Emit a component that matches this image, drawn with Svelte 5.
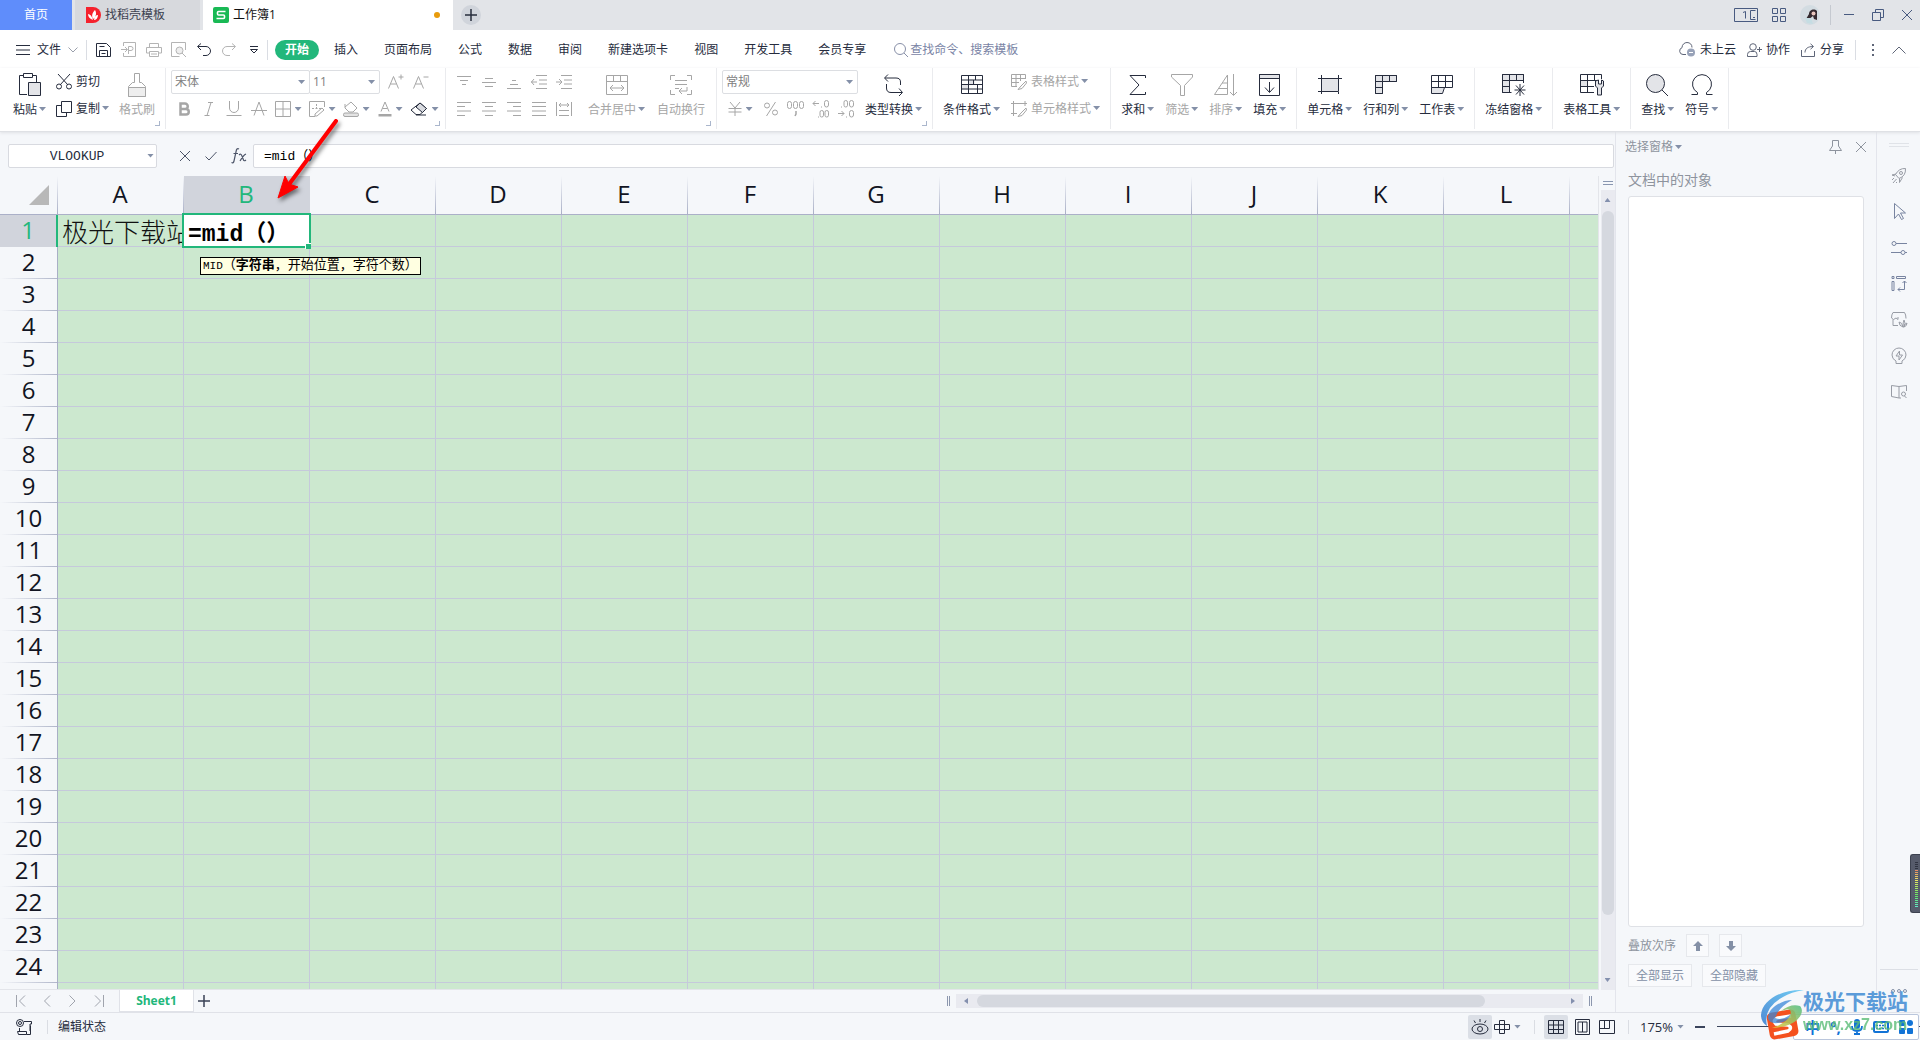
<script lang="ts">
  type Icon = [number, number, string];
  interface Tool { label: string; icon: string; off?: boolean; caret?: boolean }

  // width, height, inner svg
  const icons: Record<string, Icon> = {
    docer: [16, 16, '<path d="M1 0h7a8 8 0 0 1 0 16H1z" fill="#f5222d" stroke="none"/><path d="M8 13C5 12 3 10 3 7c2 0 4 2 5 6zM8 12C6 8 8 5 10 3c2 3 1 7-2 9zM9 13c0-3 2-5 4-5 0 3-2 5-4 5z" fill="#fff" stroke="none"/>'],
    sheet: [16, 16, '<rect width="16" height="16" rx="2" fill="#19b955" stroke="none"/><path d="M12.500 4.500H5.500a1 1 0 0 0-1 1V7a1 1 0 0 0 1 1h5a1 1 0 0 1 1 1v1.500a1 1 0 0 1-1 1h-7" stroke="#fff" stroke-width="1.600"/>'],
    plus: [12, 12, '<path d="M6 0v12M0 6h12" stroke-width="1.500"/>'],
    window: [24, 14, '<path d="M.5.5h23v13H.5zM21.500 2.500h-5v9h5M19 9.500h2"/><path d="M9 4.500l2.500-1v7"/>'],
    apps: [14, 14, '<path d="M.5.5h5v5h-5zM8.500.5h5v5h-5zM.5 8.500h5v5h-5zM8.500 8.500h5v5h-5z"/>'],
    avatar: [20, 20, '<circle cx="10" cy="10" r="10" fill="#d3dce2" stroke="none"/><path d="M9 9c0-4 5-6 8-3l0 9-3-1-1-3-5 4-2-1z" fill="#33292f" stroke="none"/><circle cx="13.500" cy="8.500" r="2" fill="#e8c5bd" stroke="none"/><path d="M5 13l6 0 2 6-6-1z" fill="#c5dde3" stroke="none"/>'],
    min: [12, 12, '<path d="M1 5.500h10"/>'],
    restore: [12, 12, '<path d="M.5 3.500h8v8h-8zM3.500 3.500v-3h8v8h-3"/>'],
    close: [12, 12, '<path d="M1 1l10 10M11 1L1 11"/>'],
    menu: [14, 10, '<path d="M0 .5h14M0 5h14M0 9.500h14"/>'],
    down: [10, 6, '<path d="M.5.5L5 5 9.500.5"/>'],
    up: [14, 8, '<path d="M.5 7.500L7 1l6.500 6.500"/>'],
    save: [16, 16, '<path d="M.5 1.500h10l4 4v9H.5zM3.500 14.500v-6h8v6M3.500 4.500h5M5.500 11.500h4"/>'],
    output: [16, 16, '<path d="M2.500 4V.5h12v14h-12V11M0 7.500h6M4 5l2.500 2.500L4 10M7.500 12V4.500h2.500a2 2 0 0 1 0 4H8"/>'],
    print: [16, 16, '<path d="M3.500 5V1.500h9V5M3.500 11H.5V5.500h15V11h-3M3.500 9.500h9v5h-9zM5 12h6"/>'],
    preview: [16, 16, '<path d="M14.500 8V.5H.5v14h8"/><circle cx="8.500" cy="8.500" r="3.500" fill="#eee"/><path d="M11 11l4 4"/>'],
    undo: [14, 14, '<path d="M4 .5L.5 3.500 4 7M1 3.500h8a4 4 0 0 1 0 9H6"/>'],
    redo: [14, 14, '<path d="M10 .5l3.500 3L10 7M13 3.500H5a4 4 0 0 0 0 9h3"/>'],
    more: [8, 8, '<path d="M0 .5h8M.5 3.500L4 7l3.500-3.500z"/>'],
    search: [14, 14, '<circle cx="6" cy="6" r="5.500"/><path d="M10 10l4 4"/>'],
    cloud: [17, 16, '<path d="M7 12.500H4a3.500 3.500 0 0 1-1-6.800C3 2.500 5.500.5 8 .5c3 0 5 2 5 5"/><circle cx="12" cy="10.500" r="4" fill="#98a2b8" stroke="none"/><path d="M10 10.500h4" stroke="#fff"/>'],
    user: [15, 14, '<circle cx="6" cy="4" r="3.300"/><path d="M.5 13.500v-2q0-3 3-3h4q2.500 0 2.500 3v2zM10 6.500h5M12.500 4v5"/>'],
    share: [15, 14, '<path d="M.5 7v6.500h13V8M4 9.500c0-4 3-6 8-6M9.500.8l3 2.700-3 2.700"/>'],
    dots: [4, 14, '<path d="M1 1h2v2H1zM1 6h2v2H1zM1 11h2v2H1z" fill="currentColor" stroke="none"/>'],
    paste: [22, 24, '<path d="M8 21.500H.5v-19H4M14 2.500h3.500V9M4.500.5h9v4h-9z"/><path d="M9.500 9.500h12v13h-12z" fill="#e3e4e8"/>'],
    cut: [16, 16, '<path d="M2 0l10 11M14 0L4 11"/><circle cx="3" cy="12.500" r="2.500"/><circle cx="13" cy="12.500" r="2.500"/>'],
    copy: [16, 16, '<path d="M5.500.5h10v11h-10zM5 4.500H.5v11h10V12"/>'],
    brush: [18, 24, '<path d="M6.500.5h5v9h2l4 4v10H.5v-10l4-4h2z"/><path d="M.5 14.500h17v9H.5z" fill="#eee"/>'],
    fontUp: [16, 16, '<path d="M.5 14.500l5-12 5 12M2.500 10h6M10.500 3h5M13 .5v5"/>'],
    fontDown: [16, 16, '<path d="M.5 14.500l5-12 5 12M2.500 10h6M10.500 3h5"/>'],
    bold: [12, 14, '<path d="M2.500 1.500h4.500a2.500 2.500 0 0 1 0 5.500H2.500zM2.500 7h5.500a2.700 2.700 0 0 1 0 5.500H2.500z" stroke-width="2.500"/>'],
    italic: [10, 14, '<path d="M4 .5h5M.5 13.500h5M7 .5l-4 13"/>'],
    underline: [16, 16, '<path d="M3.500 0v7a4.500 4.500 0 0 0 9 0V0M.5 14.500h15"/>'],
    strike: [16, 16, '<path d="M3 14.500L8 1l5 13.500M0 9.500h16"/>'],
    borders: [16, 16, '<path d="M.5.5h15v15H.5zM.5 8h15M8 .5v15"/>'],
    draw: [16, 16, '<path d="M15.500 6V.5H.5v15H6M3 7.500h2M6.500 7.500h2M7.500 3v2M7.500 6v2M10 7.500h2M6 13l7-6 2 2-7 6H6z"/>'],
    fill: [16, 16, '<path d="M2 6L8 1l6 6-4 4H6L2 7V3"/><rect x=".5" y="12" width="15" height="3.500" rx="1.500" fill="#e3e3e3"/>'],
    color: [14, 16, '<path d="M3 10.500L7 1l4 9.500M4.500 7.500h5"/><path d="M.5 13h13v2.500H.5z" fill="currentColor" stroke="none"/>'],
    eraser: [18, 14, '<path d="M10 1l6.500 5.500-6.500 6H6L1 8z"/><path d="M10 1l6.500 5.500-4 4L6 5z" fill="#d9dbe0"/><path d="M6 13h10"/>'],
    alTop: [14, 14, '<path d="M0 1.500h14M3 5.500h8M5 9.500h4"/>'],
    alMid: [14, 14, '<path d="M3 3.500h8M0 7.500h14M3 11.500h8"/>'],
    alBot: [14, 14, '<path d="M5 5.500h4M3 9.500h8M0 13.500h14"/>'],
    outdent: [16, 14, '<path d="M5 .5h11M8 5h8M8 9h8M0 7h6M3 4L.5 7 3 10M5 13.500h11"/>'],
    indent: [16, 14, '<path d="M5 .5h11M8 5h8M8 9h8M0 7h6M3 4l3 3-3 3M5 13.500h11"/>'],
    alLeft: [14, 14, '<path d="M0 .5h14M0 4.500h8M0 9h14M0 13.500h8"/>'],
    alCenter: [14, 14, '<path d="M0 .5h14M3 4.500h8M0 9h14M3 13.500h8"/>'],
    alRight: [14, 14, '<path d="M0 .5h14M6 4.500h8M0 9h14M6 13.500h8"/>'],
    justify: [14, 14, '<path d="M0 .5h14M0 4.500h14M0 9h14M0 13.500h14"/>'],
    distribute: [16, 14, '<path d="M.5 0v14M15.500 0v14M3 3h10M5 1L3 3l2 2M11 1l2 2-2 2M3 8.500h10M3 13.500h10"/>'],
    merge: [22, 20, '<path d="M.5.5h21v19H.5zM.5 6.500h21M7.500.5v6M14.500.5v6M4 13h14M7 10l-3 3 3 3M15 10l3 3-3 3"/>'],
    wrap: [22, 20, '<path d="M5 .5H.5V5M17 .5h4.500V5M5 19.500H.5V15M17 19.500h4.500V15M5 5.500h12M5 9.500h12M5 13.500h4M17 12v4H9M12 13l-3 3 3 3"/>'],
    yen: [14, 14, '<path d="M2 0l5 6 5-6M7 6v8M.5 6.500h13M.5 10h13"/>'],
    percent: [14, 14, '<circle cx="3" cy="3.500" r="2.500"/><circle cx="11" cy="10.500" r="2.500"/><path d="M11.500 0l-9 14"/>'],
    thousand: [18, 16, '<rect x=".5" y=".5" width="4" height="7" rx="2"/><rect x="6.500" y=".5" width="4" height="7" rx="2"/><rect x="12.500" y=".5" width="4" height="7" rx="2"/><path d="M9 10v3l-1 2" stroke-width="1.500"/>'],
    decMore: [16, 18, '<path d="M0 3.500h6M2.500 1L0 3.500 2.500 6M8 7h1M5 17h1"/><rect x="11.500" y=".5" width="4" height="6.500" rx="2"/><rect x="7" y="10.500" width="3.500" height="6.500" rx="1.700"/><rect x="12" y="10.500" width="3.500" height="6.500" rx="1.700"/>'],
    decLess: [16, 18, '<path d="M0 13.500h6M3.500 11L6 13.500 3.500 16M3 7h1M8 17h1"/><rect x="6" y=".5" width="3.500" height="6.500" rx="1.700"/><rect x="11.500" y=".5" width="4" height="6.500" rx="2"/><rect x="11.500" y="10.500" width="4" height="6.500" rx="2"/>'],
    convert: [20, 22, '<path d="M4 .5L.5 4 4 7.500M1 4h11q4.500 0 4.500 4v3M2.500 10v4q0 4.500 4.500 4.500h11M15 14.500l3.500 4-3.500 3.500"/>'],
    condition: [22, 20, '<path d="M7.500 4.500h6v5h-6zM1 9.500h6.500v5H1z" fill="#e3e4e8" stroke="none"/><path d="M.5.5h21v18H.5zM.5 5h21M.5 9.500h21M.5 14h21M7.500.5V14M14.500.5V5M12.500 5v4.500M16.500 9.500v9M7.500 14v4.500" />'],
    tableStyle: [16, 16, '<path d="M14.500 5V.5H.5v12H6M.5 4.500h14M.5 8.500H8M5 .5v12M9.500.5V7M15 7l-5 5-3 3.500 4-1 4.500-5.500z"/>'],
    cellStyle: [16, 16, '<path d="M0 2.500h16M2.500 0v15M0 12.500h6M14 0v5M15 7l-5 5-3 3.500 4-1 4.500-5.500z"/>'],
    sum: [18, 20, '<path d="M16.500 3V.5H1L10 10 1 19.500h15.500V17"/>'],
    filter: [22, 22, '<path d="M.5.5h21V3l-8 8.500v10h-4v-10L.5 3z"/>'],
    sort: [24, 22, '<path d="M13.500 1v19.500H.5zM8 9h5.500M4.500 14.500h9M19.500 0v21M16 18l3.500 3.500L23 18"/>'],
    fillDown: [22, 22, '<path d="M.5.5h20v4H.5z" fill="#e3e4e8"/><path d="M.5.5h20v21H.5zM10.500 8v10M6 13.500l4.500 5 4.500-5"/>'],
    cell: [24, 20, '<path d="M3.500 3.500h17v13h-17z" fill="#e3e4e8"/><path d="M3.500 0v19M20.500 0v14M0 3.500h24M0 16.500h18M20.500 17v2"/>'],
    rowcol: [22, 20, '<path d="M.5.5h21v6h-14v12h-7z" fill="#e3e4e8"/><path d="M.5.5h21v6h-14v12h-7zM7.500.5v6H.5M14.500.5v6M.5 12.500h7"/>'],
    worksheet: [22, 20, '<path d="M.5 12.500h13l-2 6H.5z" fill="#e3e4e8"/><path d="M.5.5h21v12H.5zM.5 6.500h21M7.500.5v12M14.500.5v12"/>'],
    freeze: [24, 22, '<path d="M.5.5h21v6h-14v12h-7z" fill="#e3e4e8"/><path d="M.5.5h21V9M.5.5v18h9M.5 6.500h21M.5 12.500h7M7.500.5v18M14.500.5v6M18 10v12M12.500 16h11M14 11.500l8 9M22 11.500l-8 9"/>'],
    tableTool: [24, 22, '<path d="M1 6.500h7v6H1z" fill="#e3e4e8" stroke="none"/><path d="M21.500 5V.5H.5v18H14M.5 6.500H17M.5 12.500H14M7.500.5v18M14.500.5v6"/><path d="M15.500 7v5l2 2v7h4v-7l2-2V7l-2-1v4h-3V6z" fill="#e3e4e8"/>'],
    find: [23, 22, '<circle cx="9.500" cy="9.500" r="9" fill="#e3e4e8"/><path d="M16 16l6 6"/>'],
    omega: [22, 22, '<path d="M.5 20.500h6v-2a9.500 9.500 0 1 1 9 0v2h6"/>'],
    check: [12, 10, '<path d="M.5 5.500L4 9l7.500-8"/>'],
    fx: [16, 16, '<path d="M8 1Q5.500-.5 5 4L3 13q-.5 2.500-2.500 1.500M2.500 5.500H7M8 7q2-2 3 1l1.500 4q.5 1.500 2.500 0M15 6q-2.500 1-6 7" stroke-width="1.200"/>'],
    pin: [13, 14, '<path d="M3.500.5h6V6l3 4.500H.5l3-4.500zM6.500 10.500V14"/>'],
    rocket: [16, 16, '<path d="M14.500.5Q8 0 4.500 6.500L8 10.500Q15 8 14.500.5zM5 6L1 7l3 1M8.500 10.500l0 4 3-5M3 10l-2 2M5.500 11L2 15M6 14l-1 1"/><circle cx="10" cy="5" r="1.500"/>'],
    pointer: [16, 18, '<path d="M3.500.5v15l4-4.500 3 5.500 2-1-3-5.500h5z"/>'],
    sliders: [16, 14, '<circle cx="3" cy="2.500" r="2"/><circle cx="12" cy="11.500" r="2"/><path d="M5 2.500h11M0 11.500h10M14 11.500h2"/>'],
    resize: [16, 16, '<path d="M1 .5h2v2H1zM5.500.5h9v2h-9zM1 5.500h2v9H1zM13.500 5v8.500H7M11.500 7l2-2 2 2M9 11.500l-2 2 2 2"/>'],
    store: [16, 16, '<path d="M2 .5h11.500q1.500 2 1.500 6M2 .5Q.5 2.500.5 6l2 1.500L5 6l2 1.500V5M2 7.500v6h5M12 15q-4-1-4-5 3 0 4 5 0-5 1-7 2 3 0 7 0-3 3-4 0 3-3 4z"/>'],
    bulb: [16, 16, '<path d="M5 13q-4-2-4-6a6.500 6.500 0 0 1 14 0q0 4-4 6v2.500H5zM8.500 3L5 8h3v4l3.500-5h-3z"/>'],
    book: [16, 14, '<path d="M8 1.500L.5.5v11L8 13M8 1.500L15.500.5V6M8 1.500V13h2M15.500 13l-2-2"/><circle cx="12.500" cy="9" r="2"/>'],
    ellipsis: [16, 4, '<circle cx="2" cy="2" r="1.500"/><circle cx="8" cy="2" r="1.500"/><circle cx="14" cy="2" r="1.500"/>'],
    first: [10, 12, '<path d="M.5 0v12M9 .5L3.500 6 9 11.500"/>'],
    prev: [7, 12, '<path d="M6 .5L.5 6 6 11.500"/>'],
    next: [7, 12, '<path d="M.5.5L6 6 .5 11.500"/>'],
    last: [10, 12, '<path d="M9.500 0v12M1 .5L6.500 6 1 11.500"/>'],
    macro: [16, 16, '<circle cx="4" cy="4" r="3.500"/><circle cx="4" cy="4" r="1.500"/><path d="M8 2.500h7.500V5H14v7M1.500 12.500h9v3H2.500zM3.500 9v3.500M10.500 15.500h4v-9"/>'],
    eye: [18, 16, '<ellipse cx="9" cy="10" rx="8" ry="5"/><circle cx="9" cy="10" r="2.500"/><path d="M9 0v3M3 1.500L4.500 4M15 1.500L13.500 4"/>'],
    cross: [16, 14, '<path d="M.5 4.500h15v5H.5zM5.500.5h5v13h-5z"/>'],
    normal: [16, 14, '<path d="M.5.5h15v13H.5zM.5 5h15M.5 9.500h15M5.500.5v13M10.500.5v13"/>'],
    page: [16, 16, '<path d="M.5.5h14v15H.5zM3 3h9v10H3zM7.500 3v10"/>'],
    layout: [16, 14, '<path d="M.5.5h15v13H.5zM.5 8.500h10v-8M5.500.5v8"/>'],
    arrowUp: [10, 10, '<path d="M5 0l5 5H7v5H3V5H0z" fill="currentColor" stroke="none"/>'],
    arrowDown: [10, 10, '<path d="M5 10L0 5h3V0h4v5h3z" fill="currentColor" stroke="none"/>'],
    voice: [12, 16, '<rect x="3" width="6" height="10" rx="3" fill="currentColor" stroke="none"/><path d="M1 7q0 5 5 5t5-5M6 12v4M3 15h6" stroke-width="1.800"/>'],
    keys: [16, 12, '<rect x="1" y="1" width="14" height="10" rx="1" stroke-width="2"/><path d="M3 4.500h10M3 7.500h10" stroke-width="1.500" stroke-dasharray="2 1"/>'],
    tiles: [14, 14, '<g fill="currentColor" stroke="none"><rect width="6" height="6" rx="1"/><circle cx="11" cy="3" r="3"/><rect y="8" width="6" height="6" rx="1"/><rect x="8" y="8" width="6" height="6" rx="1"/></g>'],
  };

  const menus = ['插入', '页面布局', '公式', '数据', '审阅', '新建选项卡', '视图', '开发工具', '会员专享'];
  const quick: [string, boolean][] = [['save', false], ['output', true], ['print', true], ['preview', true], ['undo', false], ['redo', true], ['more', false]];
  const fontTools = ['bold', 'italic', 'underline', 'strike'];
  const paintTools = ['borders', 'draw', 'fill', 'color', 'eraser'];
  const alignRows = [['alTop', 'alMid', 'alBot', 'outdent', 'indent'], ['alLeft', 'alCenter', 'alRight', 'justify', 'distribute']];
  const numTools = ['percent', 'thousand', 'decMore', 'decLess'];
  const endGroups: Tool[][] = [
    [{ label: '求和', icon: 'sum' }, { label: '筛选', icon: 'filter', off: true }, { label: '排序', icon: 'sort', off: true }, { label: '填充', icon: 'fillDown' }],
    [{ label: '单元格', icon: 'cell' }, { label: '行和列', icon: 'rowcol' }, { label: '工作表', icon: 'worksheet' }],
    [{ label: '冻结窗格', icon: 'freeze' }],
    [{ label: '表格工具', icon: 'tableTool' }],
    [{ label: '查找', icon: 'find' }, { label: '符号', icon: 'omega' }],
  ];
  const sideTools = ['rocket', 'pointer', 'sliders', 'resize', 'store', 'bulb', 'book'];

  // the trailing column and row are only partly in view and carry no label
  const cols = [...'ABCDEFGHIJKL'.split(''), ''];
  const rows = [...Array.from({ length: 24 }, (_, i) => i + 1), ''];
  const levels = Array.from({ length: 23 }, (_, i) => (i < 4 ? '#2f3340' : `hsl(${20 + (i - 4) * 8} 75% 65%)`));

  let formula = $state('=mid（）');
</script>

{#snippet icon(name: string)}
  <svg class="icon" width={icons[name][0]} height={icons[name][1]} viewBox="0 0 {icons[name][0]} {icons[name][1]}" aria-hidden="true">{@html icons[name][2]}</svg>
{/snippet}

{#snippet caret()}<i class="caret"></i>{/snippet}

{#snippet big(t: Tool)}
  <button class="big" class:off={t.off}>
    <span class="big-icon">{@render icon(t.icon)}</span>
    <span class="lbl">{t.label}{#if t.caret !== false}{@render caret()}{/if}</span>
  </button>
{/snippet}

{#snippet small(t: Tool)}
  <button class="small" class:off={t.off}>
    {@render icon(t.icon)}<span class="lbl">{t.label}{#if t.caret !== false}{@render caret()}{/if}</span>
  </button>
{/snippet}

<div class="app">
  <header class="tabs">
    <button class="home">首页</button>
    <button class="tab">{@render icon('docer')}找稻壳模板</button>
    <button class="tab active">{@render icon('sheet')}工作簿1<i class="dirty"></i></button>
    <button class="add" aria-label="新建">{@render icon('plus')}</button>
    <div class="win">
      <button aria-label="窗口">{@render icon('window')}</button>
      <button aria-label="应用">{@render icon('apps')}</button>
      <button aria-label="账号">{@render icon('avatar')}</button>
      <i class="bar"></i>
      <button aria-label="最小化">{@render icon('min')}</button>
      <button aria-label="还原">{@render icon('restore')}</button>
      <button aria-label="关闭">{@render icon('close')}</button>
    </div>
  </header>

  <nav class="menubar">
    <button class="file">{@render icon('menu')}文件{@render icon('down')}</button>
    <i class="bar"></i>
    <div class="quick">
      {#each quick as [name, off]}
        <button class:off aria-label={name}>{@render icon(name)}</button>
      {/each}
    </div>
    <i class="bar"></i>
    <button class="pill">开始</button>
    <div class="menus">
      {#each menus as m}<button>{m}</button>{/each}
    </div>
    <label class="find">{@render icon('search')}<input placeholder="查找命令、搜索模板" /></label>
    <div class="account">
      <button>{@render icon('cloud')}未上云</button>
      <button>{@render icon('user')}协作</button>
      <button>{@render icon('share')}分享</button>
      <i class="bar"></i>
      <button class="dots" aria-label="更多">{@render icon('dots')}</button>
      <button aria-label="收起">{@render icon('up')}</button>
    </div>
  </nav>

  <section class="ribbon">
    <div class="group clip">
      {@render big({ label: '粘贴', icon: 'paste' })}
      <div class="stack">
        {@render small({ label: '剪切', icon: 'cut', caret: false })}
        {@render small({ label: '复制', icon: 'copy' })}
      </div>
      {@render big({ label: '格式刷', icon: 'brush', off: true, caret: false })}
      <i class="corner"></i>
    </div>

    <div class="group tight font">
      <div class="stack">
        <div class="line">
          <span class="pick wide"><select aria-label="字体"><option>宋体</option></select>{@render caret()}</span>
          <span class="pick size"><select aria-label="字号"><option>11</option></select>{@render caret()}</span>
          <button class="cell off letter" aria-label="增大字号">{@render icon('fontUp')}</button>
          <button class="cell off" aria-label="减小字号">{@render icon('fontDown')}</button>
        </div>
        <div class="line">
          {#each fontTools as t}<button class="cell off" aria-label={t}>{@render icon(t)}</button>{/each}
          {#each paintTools as t}
            <button class="cell drop" class:off={t !== 'eraser'} aria-label={t}>{@render icon(t)}{@render caret()}</button>
          {/each}
        </div>
      </div>
      <i class="corner"></i>
    </div>

    <div class="group tight">
      <div class="stack">
        {#each alignRows as r}
          <div class="line">
            {#each r as t}<button class="cell off" aria-label={t}>{@render icon(t)}</button>{/each}
          </div>
        {/each}
      </div>
      {@render big({ label: '合并居中', icon: 'merge', off: true })}
      {@render big({ label: '自动换行', icon: 'wrap', off: true, caret: false })}
      <i class="corner"></i>
    </div>

    <div class="group tight number">
      <div class="stack">
        <div class="line">
          <span class="pick"><select aria-label="数字格式"><option>常规</option></select>{@render caret()}</span>
        </div>
        <div class="line">
          <button class="cell drop off" aria-label="货币">{@render icon('yen')}{@render caret()}</button>
          {#each numTools as t}<button class="cell off" aria-label={t}>{@render icon(t)}</button>{/each}
        </div>
      </div>
      {@render big({ label: '类型转换', icon: 'convert' })}
      <i class="corner"></i>
    </div>

    <div class="group">
      {@render big({ label: '条件格式', icon: 'condition' })}
      <div class="stack">
        {@render small({ label: '表格样式', icon: 'tableStyle', off: true })}
        {@render small({ label: '单元格样式', icon: 'cellStyle', off: true })}
      </div>
    </div>

    {#each endGroups as g}
      <div class="group">
        {#each g as t}{@render big(t)}{/each}
      </div>
    {/each}
  </section>

  <main class="work">
    <div class="book">
      <div class="formula">
        <span class="namebox"><input aria-label="名称框" value="VLOOKUP" />{@render caret()}</span>
        <div class="fbtns">
          <button aria-label="取消">{@render icon('close')}</button>
          <button aria-label="输入">{@render icon('check')}</button>
          <button aria-label="插入函数">{@render icon('fx')}</button>
        </div>
        <input class="fx" aria-label="编辑栏" bind:value={formula} />
      </div>

      <div class="sheet">
        <div class="grid">
          <table>
            <colgroup>
              <col class="rh" />
              {#each cols as c}<col />{/each}
            </colgroup>
            <thead>
              <tr>
                <th class="all"></th>
                {#each cols as c}<th class:sel={c === 'B'}>{c}</th>{/each}
              </tr>
            </thead>
            <tbody>
              {#each rows as r}
                <tr>
                  <th class:sel={r === 1}>{r}</th>
                  {#each cols as c}
                    {#if r === 1 && c === 'A'}
                      <td class="text">极光下载站</td>
                    {:else if r === 1 && c === 'B'}
                      <td class="edit">
                        <input aria-label="B1" bind:value={formula} />
                        <i class="handle"></i>
                        <div class="hint"><span>MID</span>（<b>字符串</b>，开始位置，字符个数）</div>
                      </td>
                    {:else}
                      <td></td>
                    {/if}
                  {/each}
                </tr>
              {/each}
            </tbody>
          </table>
        </div>
        <div class="vscroll">
          <i class="split"></i>
          <div class="track">
            <button class="tri t-up" aria-label="向上"></button>
            <i class="thumb"></i>
            <button class="tri t-down" aria-label="向下"></button>
          </div>
        </div>
      </div>

      <div class="sheetbar">
        <div class="pager">
          <button aria-label="第一个">{@render icon('first')}</button>
          <button aria-label="上一个">{@render icon('prev')}</button>
          <button aria-label="下一个">{@render icon('next')}</button>
          <button aria-label="最后一个">{@render icon('last')}</button>
        </div>
        <button class="sheet1">Sheet1</button>
        <button class="addsheet" aria-label="新建工作表">{@render icon('plus')}</button>
        <div class="hscroll">
          <i class="grip"></i>
          <div class="htrack">
            <button class="tri t-left" aria-label="向左"></button>
            <i class="hthumb"></i>
            <button class="tri t-right" aria-label="向右"></button>
          </div>
          <i class="grip"></i>
        </div>
      </div>
    </div>

    <aside class="pane">
      <div class="pane-head">
        <button class="title">选择窗格{@render caret()}</button>
        <button aria-label="固定">{@render icon('pin')}</button>
        <button aria-label="关闭窗格">{@render icon('close')}</button>
      </div>
      <h2>文档中的对象</h2>
      <div class="objects"></div>
      <div class="order">
        <span>叠放次序</span>
        <button aria-label="上移">{@render icon('arrowUp')}</button>
        <button aria-label="下移">{@render icon('arrowDown')}</button>
      </div>
      <div class="show">
        <button>全部显示</button>
        <button>全部隐藏</button>
      </div>
    </aside>

    <aside class="side">
      <i class="grab"></i>
      {#each sideTools as s, i}
        <button class:strong={i > 0 && i < 4} aria-label={s}>{@render icon(s)}</button>
      {/each}
      <i class="rule"></i>
      <button class="ell" aria-label="更多">{@render icon('ellipsis')}</button>
    </aside>
  </main>

  <footer class="status">
    <button class="macro" aria-label="宏">{@render icon('macro')}</button>
    <i class="bar"></i>
    <span class="state">编辑状态</span>
    <div class="views">
      <button class="on" aria-label="护眼模式">{@render icon('eye')}</button>
      <button class="read" aria-label="阅读模式">{@render icon('cross')}{@render caret()}</button>
      <i class="bar"></i>
      <button class="on" aria-label="普通视图">{@render icon('normal')}</button>
      <button aria-label="分页预览">{@render icon('page')}</button>
      <button aria-label="自定义视图">{@render icon('layout')}</button>
      <i class="bar"></i>
    </div>
    <button class="zoom">175%{@render caret()}</button>
    <i class="minus"></i>
    <i class="slide"></i>
  </footer>

  <svg class="arrow" width="80" height="96" viewBox="0 0 80 96" aria-hidden="true">
    <path d="M66 11L20 73" stroke="#ff0000" stroke-width="4" stroke-linecap="round" />
    <path d="M8 88l7-22 4 8 9 3z" fill="#ff0000" stroke="#ff0000" stroke-width="1" />
  </svg>

  <div class="meter">
    {#each levels as l}<i style="background: {l}"></i>{/each}
  </div>

  <div class="ime">
    <button>中</button>
    <button>°,</button>
    <button aria-label="语音">{@render icon('voice')}</button>
    <button aria-label="键盘">{@render icon('keys')}</button>
    <button aria-label="工具箱">{@render icon('tiles')}</button>
  </div>

  <div class="mark">
    <svg width="44" height="52" viewBox="0 0 44 52" aria-hidden="true">
      <defs>
        <linearGradient id="sky" x1="1" y1="0" x2="0" y2="1"><stop offset="0" stop-color="#63c8f3" /><stop offset="1" stop-color="#3d7fd0" /></linearGradient>
        <linearGradient id="leaf" x1="1" y1="0" x2="0" y2="1"><stop offset="0" stop-color="#55c08a" /><stop offset="1" stop-color="#e9c53a" /></linearGradient>
      </defs>
      <rect x="8" y="23" width="29" height="27" rx="5" fill="#f4511e" transform="rotate(-10 22 36)" />
      <path d="M31 28l-13 2q-6 2-2 6l12 1q5 3 0 6l-14 3" fill="none" stroke="#fff" stroke-width="3.500" />
      <path d="M44 2C20 1 2 13 1 27q0 7 6 11Q3 20 23 9 31 4 44 2z" fill="url(#sky)" opacity=".9" />
      <path d="M8 30C8 20 22 12 32 12q-14 8-17 18 8 3 16-4-2 8-13 9-9 1-10-5z" fill="#3987d8" opacity=".75" />
      <path d="M21 23q10-8 19-5c6 6-2 21-28 22 15-5 21-13 18-18-2-2-6 0-9 1z" fill="url(#leaf)" opacity=".9" />
    </svg>
    <div class="words">
      <strong>极光下载站</strong>
      <span>www.xz7.com</span>
    </div>
  </div>
</div>

<style>
  :global(body) {
    margin: 0;
  }
  .app {
    position: relative;
    display: flex;
    flex-direction: column;
    height: 100vh;
    overflow: hidden;
    background: #f5f7fa;
    color: #262c3d;
    font: 12px/18px 'Open Sans', 'Noto Sans CJK SC', sans-serif;
  }
  .app *,
  .app {
    box-sizing: border-box;
  }
  button {
    display: flex;
    align-items: center;
    flex: none;
    padding: 0;
    border: 0;
    background: none;
    color: inherit;
    font: inherit;
    white-space: nowrap;
  }
  input,
  select {
    min-width: 0;
    border: 0;
    outline: 0;
    padding: 0;
    background: none;
    color: inherit;
    font: inherit;
    appearance: none;
  }
  .icon {
    flex: none;
    display: block;
    fill: none;
    stroke: currentColor;
    overflow: visible;
  }
  .caret {
    display: inline-block;
    flex: none;
    width: 7px;
    height: 4px;
    margin-left: 2px;
    background: #8490a8;
    clip-path: polygon(0 0, 100% 0, 50% 100%);
    vertical-align: 3px;
  }
  .bar {
    flex: none;
    width: 1px;
    height: 20px;
    background: #dadde3;
  }
  .off {
    color: #a6a6a6;
  }

  .tabs {
    display: flex;
    flex: none;
    height: 30px;
    background: #e2e4e8;
  }
  .home {
    justify-content: center;
    width: 72px;
    background: #5f8dfb;
    color: #fff;
  }
  .tab {
    gap: 4px;
    width: 125px;
    margin-left: 3px;
    padding-left: 10px;
    background: #d7d9dd;
    color: #3c4150;
  }
  .tab.active {
    width: 250px;
    background: #fff;
    color: #111;
  }
  .dirty {
    width: 6px;
    height: 6px;
    margin: 0 13px 0 auto;
    border-radius: 50%;
    background: #e89b0c;
  }
  .add {
    justify-content: center;
    align-self: center;
    width: 20px;
    height: 20px;
    margin-left: 8px;
    border-radius: 50%;
    background: #d0d4db;
  }
  .win {
    display: flex;
    align-items: center;
    gap: 14px;
    margin-left: auto;
    padding-right: 7px;
    color: #485a80;
  }
  .win .bar {
    margin: 0 -2px 0 -4px;
    background: #c5c9d0;
  }
  .win .bar ~ button + button {
    margin-left: 3px;
  }

  .menubar {
    display: flex;
    align-items: center;
    flex: none;
    height: 38px;
    padding: 2px 0 0 16px;
    background: #fff;
  }
  .file {
    gap: 7px;
    margin-right: 8px;
  }
  .file .icon:last-child {
    color: #9a9fab;
  }
  .quick {
    display: flex;
    align-items: center;
    gap: 9px;
    width: 180px;
    padding-left: 9px;
  }
  .quick button {
    justify-content: center;
    width: 16px;
  }
  .quick .off {
    color: #b4b4b4;
  }
  .pill {
    height: 20px;
    margin: 0 15px 0 7px;
    padding: 0 10px;
    border-radius: 10px;
    background: #22b77b;
    color: #fff;
    font-weight: 700;
  }
  .menus {
    display: flex;
    gap: 26px;
  }
  .find {
    display: flex;
    align-items: center;
    gap: 2px;
    margin-left: 28px;
    color: #8890a8;
  }
  .find input {
    width: 120px;
  }
  .find input::placeholder {
    color: #7a84a5;
    opacity: 1;
  }
  .account {
    display: flex;
    align-items: center;
    gap: 11px;
    margin-left: auto;
    padding-right: 14px;
  }
  .account button {
    gap: 4px;
  }
  .account .icon {
    color: #5f6678;
  }
  .account .bar {
    margin-right: 4px;
  }
  .account .dots {
    margin-right: 6px;
  }

  .ribbon {
    display: flex;
    flex: none;
    height: 64px;
    background: #fff;
    border-bottom: 1px solid #dfe1e5;
    box-shadow: 0 1px 3px #dfe1e5;
    z-index: 1;
  }
  .group {
    position: relative;
    display: flex;
    flex: none;
    gap: 11px;
    height: 61px;
    padding: 1px 10px 0 10px;
    border-right: 1px solid #eaebee;
  }
  .group.clip {
    gap: 10px;
    padding-left: 13px;
  }
  .group.tight {
    gap: 12px;
    padding: 1px 11px 0 5px;
  }
  .group.number {
    gap: 7px;
    padding-right: 10px;
  }
  .group.font {
    width: 280px;
  }
  .corner {
    position: absolute;
    right: 5px;
    bottom: 3px;
    width: 5px;
    height: 5px;
    border: solid #aab6cc;
    border-width: 0 1px 1px 0;
  }
  .big {
    flex-direction: column;
    align-items: flex-start;
    padding-top: 3px;
  }
  .big-icon {
    display: flex;
    align-items: center;
    justify-content: center;
    width: 100%;
    height: 26px;
  }
  .lbl {
    line-height: 18px;
    margin-top: 3px;
  }
  .stack {
    display: flex;
    flex-direction: column;
    gap: 1px;
  }
  .small {
    gap: 4px;
    height: 26px;
  }
  .small .lbl {
    margin: 0;
  }
  .line {
    display: flex;
    align-items: center;
    height: 26px;
  }
  .pick {
    position: relative;
    display: flex;
    align-items: center;
    width: 136px;
    height: 24px;
    padding-right: 4px;
    border: 1px solid #dcdee2;
    border-radius: 2px;
    color: #808080;
  }
  .pick.wide {
    width: 139px;
  }
  .pick.size {
    width: 71px;
    margin-left: -1px;
  }
  .pick select {
    flex: 1;
    padding-left: 3px;
    height: 22px;
  }
  .cell {
    justify-content: center;
    width: 25px;
    height: 26px;
  }
  .letter {
    margin-left: 3px;
  }
  .drop {
    width: 34px;
    gap: 2px;
  }
  .number .drop {
    width: 36px;
  }

  .work {
    display: flex;
    flex: 1;
    min-height: 0;
  }
  .book {
    display: flex;
    flex-direction: column;
    flex: 1;
    min-width: 0;
  }
  .formula {
    display: flex;
    align-items: center;
    flex: none;
    height: 44px;
    padding: 3px 1px 0 8px;
    font-family: 'Liberation Mono', 'Noto Sans CJK SC', monospace;
    font-size: 13px;
  }
  .namebox {
    display: flex;
    align-items: center;
    width: 149px;
    height: 24px;
    padding-right: 2px;
    border: 1px solid #d8dae0;
    border-radius: 2px;
    background: #fff;
  }
  .namebox input {
    flex: 1;
    padding-top: 2px;
    text-align: center;
  }
  .fbtns {
    display: flex;
    align-items: center;
    gap: 14px;
    padding-left: 22px;
    width: 96px;
    color: #4c5468;
  }
  .fx {
    flex: 1;
    height: 24px;
    padding: 0 0 2px 10px;
    border: 1px solid #d8dae0;
    border-radius: 2px;
    background: #fff;
    color: #000;
  }
  .sheet {
    display: flex;
    flex: 1;
    min-height: 0;
  }
  .grid {
    flex: 1;
    min-width: 0;
    overflow: hidden;
    border-right: 1px solid #e3e5ea;
    border-bottom: 1px solid #e3e5ea;
  }
  table {
    width: 1696px;
    table-layout: fixed;
    border-collapse: separate;
    border-spacing: 0;
    font-size: 24px;
    line-height: 28px;
  }
  col {
    width: 126px;
  }
  col.rh {
    width: 58px;
  }
  th {
    padding: 0 2px 2px 0;
    color: #111422;
    font-weight: 400;
    text-align: center;
    white-space: nowrap;
  }
  thead th {
    height: 39px;
    border-bottom: 1px solid #abb0c8;
    background: linear-gradient(#f5f7fa, #a9afc6) right / 1px 100% no-repeat;
  }
  tbody th {
    height: 32px;
    padding-right: 0;
    border-right: 1px solid #a9afc6;
    background: linear-gradient(90deg, #f5f7fa, #b0b6ca) bottom / 100% 1px no-repeat;
  }
  thead th.sel,
  tbody th.sel {
    background: #d1d4dc;
    color: #22b77b;
  }
  tbody th.sel {
    border-right: 2px solid #22b77b;
  }
  .all::after {
    content: '';
    display: block;
    width: 20px;
    height: 20px;
    margin: 2px 0 0 29px;
    background: #b8b8b8;
    clip-path: polygon(100% 0, 100% 100%, 0 100%);
  }
  td {
    height: 32px;
    padding: 0;
    border: solid #c5c9db;
    border-width: 0 1px 1px 0;
    background: #cce8cf;
  }
  .text {
    padding-left: 4px;
    overflow: hidden;
    white-space: nowrap;
    color: #111;
    font: 300 26px/30px 'Noto Sans CJK SC', sans-serif;
  }
  .edit {
    position: relative;
  }
  .edit input {
    position: absolute;
    inset: -2px -1px -2px -2px;
    width: 129px;
    height: 35px;
    padding-left: 4px;
    border: 2px solid #22b77b;
    background: #fff;
    color: #000;
    font: 700 23px/30px 'Liberation Mono', 'Noto Sans CJK SC', monospace;
  }
  .handle {
    position: absolute;
    right: -2px;
    bottom: -3px;
    width: 6px;
    height: 6px;
    border: solid #fff;
    border-width: 1px 0 0 1px;
    background: #22b77b;
  }
  .hint {
    position: absolute;
    left: 16px;
    top: 42px;
    z-index: 1;
    padding: 0 2px;
    border: 1px solid #000;
    background: #ffffe1;
    color: #000;
    white-space: nowrap;
    font: 13px/16px 'Liberation Mono', 'Noto Sans CJK SC', monospace;
  }
  .hint span {
    font-size: 11px;
  }
  .vscroll {
    display: flex;
    flex-direction: column;
    align-items: center;
    flex: none;
    width: 16px;
    padding-left: 1px;
  }
  .split {
    width: 10px;
    height: 4px;
    margin: 5px 0;
    border: solid #8996b0;
    border-width: 1px 0;
  }
  .track {
    display: flex;
    flex-direction: column;
    align-items: center;
    flex: 1;
    width: 14px;
    background: #e9eaf0;
  }
  .tri {
    width: 6px;
    height: 4px;
    background: #8490ae;
  }
  .t-up {
    margin: 8px 0 9px;
    clip-path: polygon(50% 0, 100% 100%, 0 100%);
  }
  .thumb {
    flex: 1;
    width: 12px;
    border-radius: 6px;
    background: #d5d8df;
  }
  .t-down {
    margin: 63px 0 8px;
    clip-path: polygon(0 0, 100% 0, 50% 100%);
  }
  .sheetbar {
    display: flex;
    align-items: center;
    flex: none;
    height: 22px;
  }
  .pager {
    display: flex;
    gap: 18px;
    width: 119px;
    padding-left: 16px;
    color: #a0a4ad;
  }
  .sheet1 {
    justify-content: center;
    align-self: stretch;
    width: 75px;
    border: solid #e0e2e8;
    border-width: 0 1px 1px;
    background: #fff;
    color: #22b77b;
    font-weight: 700;
  }
  .addsheet {
    margin-left: 4px;
    color: #3a4256;
  }
  .hscroll {
    display: flex;
    align-items: center;
    gap: 6px;
    width: 668px;
    margin-left: auto;
    padding-right: 23px;
  }
  .grip {
    width: 3px;
    height: 10px;
    border: solid #8c97ae;
    border-width: 0 1px;
  }
  .htrack {
    display: flex;
    align-items: center;
    flex: 1;
    height: 14px;
    background: #e9eaf0;
  }
  .hthumb {
    width: 81%;
    height: 12px;
    border-radius: 6px;
    background: #d5d8df;
  }
  .t-left,
  .t-right {
    width: 4px;
    height: 6px;
  }
  .t-left {
    margin: 0 9px 0 8px;
    clip-path: polygon(100% 0, 100% 100%, 0 50%);
  }
  .t-right {
    margin: 0 8px 0 auto;
    clip-path: polygon(0 0, 100% 50%, 0 100%);
  }

  .pane {
    display: flex;
    flex-direction: column;
    flex: none;
    width: 261px;
    padding: 6px 12px 0 12px;
    border-left: 1px solid #e3e5ec;
    color: #8e949e;
  }
  .pane-head {
    display: flex;
    align-items: center;
    gap: 13px;
    margin: 0 -3px;
    height: 18px;
  }
  .title {
    margin-right: auto;
  }
  h2 {
    margin: 12px 0 6px;
    font: 14px/22px 'Noto Sans CJK SC', sans-serif;
  }
  .objects {
    flex: 1;
    border: 1px solid #dfe1e6;
    border-radius: 3px;
    background: #fff;
  }
  .order,
  .show {
    display: flex;
    align-items: center;
    gap: 10px;
    margin-top: 7px;
  }
  .order button,
  .show button {
    justify-content: center;
    width: 23px;
    height: 23px;
    border: 1px solid #e6e8ec;
    background: #f9fafc;
    color: #8490a6;
  }
  .show {
    margin-bottom: 25px;
  }
  .show button {
    width: 64px;
  }
  .side {
    display: flex;
    flex-direction: column;
    align-items: center;
    flex: none;
    width: 44px;
    border-left: 1px solid #e3e5ec;
    color: #989ca5;
  }
  .side button {
    height: 36px;
  }
  .side .strong {
    color: #7884a0;
  }
  .grab {
    width: 20px;
    height: 4px;
    margin: 11px 0 11px;
    border: solid #e0e3e8;
    border-width: 1px 0;
  }
  .rule {
    width: 38px;
    height: 1px;
    margin-top: auto;
    background: #dcdfe5;
  }
  .side .ell {
    height: 42px;
    color: #8490a6;
  }

  .status {
    display: flex;
    align-items: center;
    flex: none;
    height: 28px;
    border-top: 1px solid #e0e2e8;
  }
  .status .bar {
    height: 14px;
  }
  .macro {
    margin: 0 15px 0 16px;
  }
  .state {
    margin-left: 10px;
  }
  .views {
    display: flex;
    align-items: center;
    gap: 6px;
    margin-left: auto;
  }
  .views button {
    justify-content: center;
    min-width: 18px;
  }
  .views .on {
    width: 24px;
    height: 24px;
    border-radius: 2px;
    background: #dbdfe6;
  }
  .views .read {
    gap: 2px;
    margin: 0 7px 0 -4px;
  }
  .views .bar + .on {
    margin-left: 3px;
  }
  .views .bar:last-child {
    margin-left: 6px;
  }
  .zoom {
    gap: 2px;
    margin-left: 11px;
    font-size: 13px;
  }
  .minus {
    width: 10px;
    height: 2px;
    margin: 0 12px 0 11px;
    background: #3b455c;
  }
  .slide {
    width: 203px;
    height: 1px;
    background: #3b455c;
  }

  .arrow {
    position: absolute;
    left: 270px;
    top: 110px;
    z-index: 3;
    fill: none;
    filter: drop-shadow(2px 3px 2px rgba(0, 0, 0, 0.5));
    pointer-events: none;
  }
  .meter {
    position: absolute;
    right: 0;
    bottom: 127px;
    display: flex;
    flex-direction: column;
    gap: 1px;
    width: 10px;
    height: 59px;
    padding: 7px 2px 0 4px;
    border: 1px solid #3d4250;
    border-right: 0;
    border-radius: 3px 0 0 3px;
    background: #565b6b;
  }
  .meter i {
    flex: none;
    height: 1px;
  }
  .ime {
    position: absolute;
    right: 1px;
    bottom: 0;
    display: flex;
    align-items: center;
    justify-content: space-between;
    width: 126px;
    height: 26px;
    padding: 0 5px 0 11px;
    border: 1px solid #bac6dc;
    border-radius: 2px;
    background: #fff;
    color: #1273d6;
    font-size: 15px;
    font-weight: 700;
  }
  .mark {
    position: absolute;
    right: 12px;
    bottom: 0;
    display: flex;
    pointer-events: none;
  }
  .words {
    display: flex;
    flex-direction: column;
    width: 105px;
    margin-left: -1px;
    white-space: nowrap;
  }
  .words strong {
    color: #5b9bd9;
    font-size: 21px;
    line-height: 26px;
  }
  .words span {
    color: #5cbd78;
    font: 700 16px/22px 'Liberation Sans', sans-serif;
    opacity: 0.8;
  }
</style>
